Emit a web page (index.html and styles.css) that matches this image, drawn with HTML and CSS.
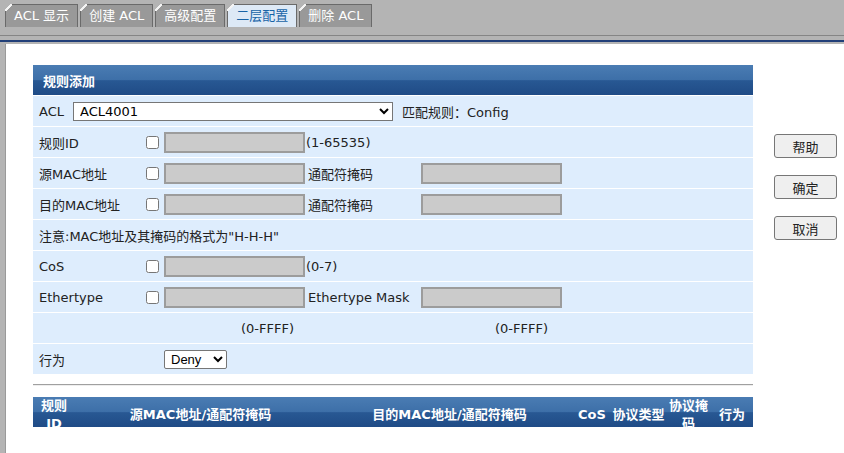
FILE: index.html
```html
<!DOCTYPE html>
<html lang="zh-CN">
<head>
<meta charset="utf-8">
<title>ACL 二层配置</title>
<link rel="stylesheet" href="styles.css">
</head>
<body>
<div class="topbar">
  <div class="tab">ACL 显示</div>
  <div class="tab">创建 ACL</div>
  <div class="tab">高级配置</div>
  <div class="tab active">二层配置</div>
  <div class="tab">删除 ACL</div>
</div>
<div class="divider"></div>
<div class="blueline"></div>
<div class="page">
  <div class="main">
    <div class="panel">
      <div class="panel-head">规则添加</div>
      <div class="form">
        <div class="row">
          <span class="lbl-acl">ACL</span>
          <select class="sel-acl"><option>ACL4001</option></select>
          <span class="match">匹配规则：Config</span>
        </div>
        <div class="row">
          <span class="lbl">规则ID</span>
          <input type="checkbox" class="chk">
          <input type="text" class="txt" disabled>
          <span class="after">(1-65535)</span>
        </div>
        <div class="row">
          <span class="lbl">源MAC地址</span>
          <input type="checkbox" class="chk">
          <input type="text" class="txt" disabled>
          <span class="lbl2">通配符掩码</span>
          <input type="text" class="txt" disabled>
        </div>
        <div class="row">
          <span class="lbl">目的MAC地址</span>
          <input type="checkbox" class="chk">
          <input type="text" class="txt" disabled>
          <span class="lbl2">通配符掩码</span>
          <input type="text" class="txt" disabled>
        </div>
        <div class="row">
          <span class="note">注意:MAC地址及其掩码的格式为"H-H-H"</span>
        </div>
        <div class="row">
          <span class="lbl">CoS</span>
          <input type="checkbox" class="chk">
          <input type="text" class="txt" disabled>
          <span class="after">(0-7)</span>
        </div>
        <div class="row">
          <span class="lbl">Ethertype</span>
          <input type="checkbox" class="chk">
          <input type="text" class="txt" disabled>
          <span class="lbl2">Ethertype Mask</span>
          <input type="text" class="txt" disabled>
        </div>
        <div class="row">
          <span class="range1">(0-FFFF)</span>
          <span class="range2">(0-FFFF)</span>
        </div>
        <div class="row">
          <span class="lbl-act">行为</span>
          <select class="sel-act"><option>Deny</option></select>
        </div>
      </div>
    </div>
    <div class="hr"></div>
    <div class="list-wrap">
      <table class="list">
        <colgroup>
          <col style="width:42px"><col style="width:251px"><col style="width:247px"><col style="width:38px"><col style="width:55px"><col style="width:45px"><col style="width:42px">
        </colgroup>
        <tr>
          <th class="th-id">规则<wbr>ID</th>
          <th>源MAC地址/通配符掩码</th>
          <th>目的MAC地址/通配符掩码</th>
          <th>CoS</th>
          <th>协议类型</th>
          <th>协议掩码</th>
          <th>行为</th>
        </tr>
      </table>
    </div>
  </div>
  <div class="side">
    <button class="btn">帮助</button>
    <button class="btn">确定</button>
    <button class="btn">取消</button>
  </div>
</div>
</body>
</html>
```
FILE: styles.css
```css
html, body {
  margin: 0;
  padding: 0;
}
body {
  background: #b4b4b4;
  font-family: "DejaVu Sans", "Noto Sans CJK SC", sans-serif;
  font-size: 13px;
  color: #222;
  min-height: 100vh;
  display: flex;
  flex-direction: column;
}
.topbar {
  height: 35px;
  box-sizing: border-box;
  padding: 4px 0 0 5px;
  display: flex;
  align-items: flex-start;
  gap: 2px;
}
.tab {
  position: relative;
  height: 23px;
  box-sizing: border-box;
  padding: 0 8px;
  background: #999999;
  border: 1px solid #6a6a6a;
  border-bottom: none;
  color: #fff;
  line-height: 22px;
  white-space: nowrap;
}
.tab::before {
  content: "";
  position: absolute;
  left: -1px;
  top: -1px;
  width: 7px;
  height: 7px;
  background: linear-gradient(135deg, #b4b4b4 0 42%, #f4f4f4 42% 58%, transparent 58%);
}
.tab.active {
  background: #dde9f6;
  color: #1763a6;
}
.divider {
  border-top: 1px solid #858585;
  height: 4px;
}
.blueline {
  height: 2px;
  background: #213f78;
  margin-bottom: 2px;
}
.page {
  flex: 1;
  margin-left: 5px;
  border-left: 1px solid #9a9a9a;
  background: #fff;
  padding: 21px 0 0 27px;
  display: flex;
  align-items: flex-start;
}
.main {
  width: 720px;
}
.panel-head {
  height: 30px;
  box-sizing: border-box;
  padding-left: 10px;
  display: flex;
  align-items: center;
  color: #fff;
  font-weight: bold;
  background: linear-gradient(#4a7cb3 0%, #3d6fa8 50%, #285893 52%, #1f4b86 100%);
}
.form {
  display: flex;
  flex-direction: column;
  gap: 1px;
  padding-top: 1px;
}
.row {
  height: 30px;
  background: #deedfd;
  display: flex;
  align-items: center;
  white-space: nowrap;
}
.lbl {
  width: 107px;
  padding-left: 6px;
}
.lbl-acl {
  width: 34px;
  padding-left: 6px;
}
.lbl-act {
  width: 125px;
  padding-left: 6px;
}
.note {
  padding-left: 6px;
}
.chk {
  width: 13px;
  height: 13px;
  margin: 0 5px 0 0;
}
.txt {
  width: 141px;
  height: 21px;
  box-sizing: border-box;
  border: 2px solid #9c9c9c;
  background: #cbcbcb;
  padding: 0;
  margin: 0;
}
.after {
  margin-left: 1px;
}
.lbl2 {
  margin-left: 3px;
  width: 113px;
}
.sel-acl {
  width: 320px;
  height: 19px;
  margin: 0;
  font-family: "DejaVu Sans", sans-serif;
  font-size: 13px;
  color: #000;
  background: #fff;
  border: 1px solid #767676;
  padding: 0 0 0 2px;
}
.match {
  margin-left: 9px;
}
.sel-act {
  width: 63px;
  height: 19px;
  margin: 0;
  font-family: "Liberation Sans", sans-serif;
  font-size: 13px;
  color: #000;
  background: #fff;
  border: 1px solid #767676;
  border-radius: 2px;
  padding: 0 0 0 2px;
}
.range1 {
  margin-left: 208px;
}
.range2 {
  margin-left: 201px;
}
.hr {
  margin-top: 10px;
  border-top: 1px solid #a0a0a0;
  border-bottom: 1px solid #eeeeee;
}
.list-wrap {
  margin-top: 11px;
  height: 30px;
  overflow: hidden;
  background: linear-gradient(#4a7cb3 0%, #3d6fa8 50%, #285893 52%, #1f4b86 100%);
}
.list {
  width: 720px;
  border-collapse: collapse;
  table-layout: fixed;
}
.list th {
  height: 34px;
  padding: 0;
  color: #fff;
  font-weight: bold;
  font-size: 13px;
  line-height: 18px;
  text-align: center;
  vertical-align: middle;
}
.list th.th-id {
  padding: 0 4px;
}
.side {
  margin-left: 21px;
  margin-top: 69px;
  display: flex;
  flex-direction: column;
  gap: 17px;
}
.btn {
  width: 63px;
  height: 24px;
  background: #efefef;
  border: 1px solid #767676;
  border-radius: 3px;
  font-family: "Noto Sans CJK SC", sans-serif;
  font-size: 13px;
  color: #222;
  padding: 0;
}
```
